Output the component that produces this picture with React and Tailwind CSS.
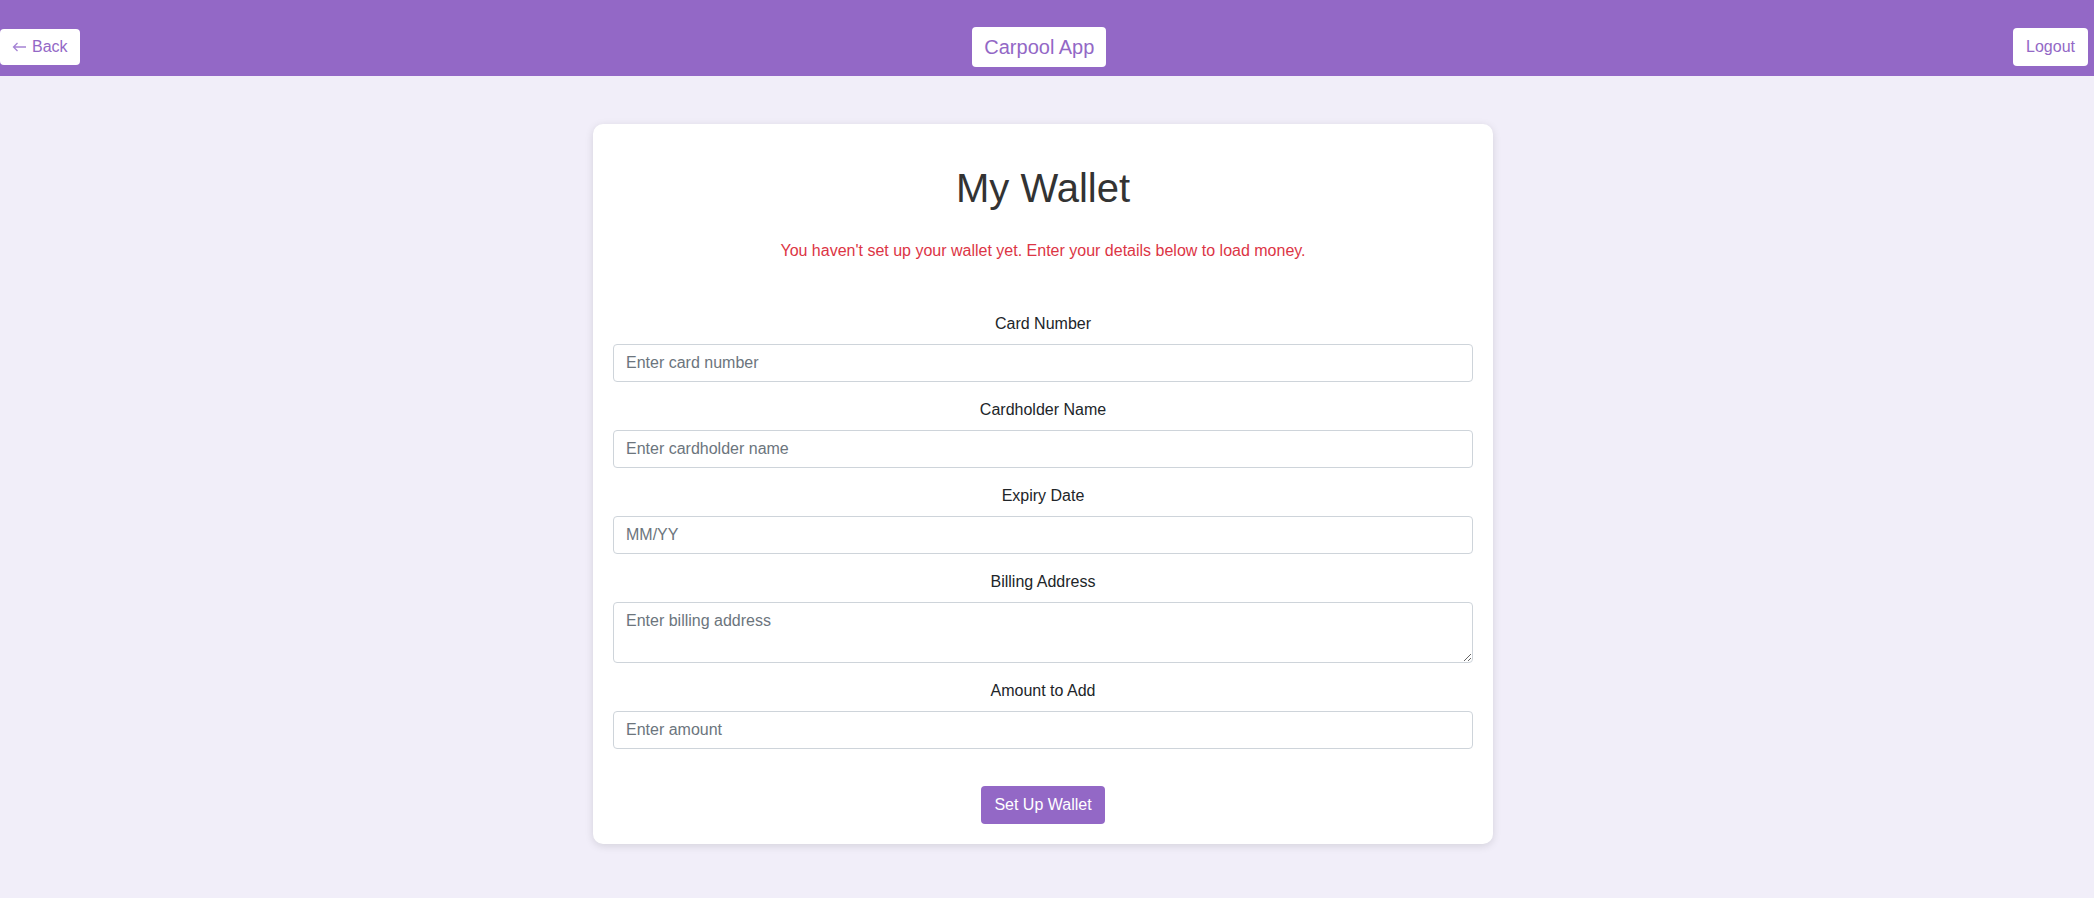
import React, { useState } from 'react';

const fields = [
  { label: 'Card Number', name: 'cardNumber', placeholder: 'Enter card number' },
  { label: 'Cardholder Name', name: 'cardholderName', placeholder: 'Enter cardholder name' },
  { label: 'Expiry Date', name: 'expiry', placeholder: 'MM/YY' },
  { label: 'Billing Address', name: 'billingAddress', placeholder: 'Enter billing address', textarea: true },
  { label: 'Amount to Add', name: 'amount', placeholder: 'Enter amount' },
];

function App() {
  const [form, setForm] = useState({
    cardNumber: '',
    cardholderName: '',
    expiry: '',
    billingAddress: '',
    amount: '',
  });

  const handleChange = (e) => {
    setForm({ ...form, [e.target.name]: e.target.value });
  };

  const handleSubmit = (e) => {
    e.preventDefault();
  };

  return (
    <div className="min-h-screen bg-[#f1eef9] font-['Liberation_Sans',Arial,sans-serif]">
      {/* Header */}
      <header className="h-[76px] bg-[#9368c6] pt-[18px] pr-[6px] flex items-center justify-between">
        <button className="h-[36px] pl-[12px] pr-[12px] bg-white rounded-[4px] text-[16px] text-[#9368c6] flex items-center gap-[6px]">
          <svg width="14" height="10" viewBox="0 0 14 10" fill="none" stroke="#a583d4" strokeWidth="1.3">
            <path d="M14 5H1.5M5.5 1L1.5 5L5.5 9" />
          </svg>
          Back
        </button>
        <button className="h-[40px] px-[12px] mr-[14px] bg-white rounded-[4px] text-[20px] text-[#9368c6] flex items-center">
          Carpool App
        </button>
        <button className="h-[38px] px-[13px] bg-white rounded-[4px] text-[16px] text-[#9368c6] flex items-center">
          Logout
        </button>
      </header>

      <main className="flex justify-center pr-[8px] pt-[48px] pb-[54px]">
        <div className="w-[900px] bg-white rounded-[10px] shadow-[0_2px_8px_rgba(0,0,0,0.12)] px-[20px] pt-[20px] pb-[20px]">
          <h1 className="mt-[20px] text-center text-[40px] leading-[48px] text-[#333333]">My Wallet</h1>
          <p className="mt-[27px] text-center text-[16px] leading-6 text-[#dc3545]">
            You haven't set up your wallet yet. Enter your details below to load money.
          </p>

          <form onSubmit={handleSubmit} className="mt-[49px] flex flex-col gap-[16px]">
            {fields.map((f) => (
              <div key={f.name}>
                <label className="block text-center text-[16px] leading-6 text-[#212529] mb-[8px]">
                  {f.label}
                </label>
                {f.textarea ? (
                  <textarea
                    name={f.name}
                    value={form[f.name]}
                    onChange={handleChange}
                    placeholder={f.placeholder}
                    className="block w-full h-[61px] px-[12px] py-[6px] text-[16px] leading-6 border border-[#ced4da] rounded-[4px] placeholder:text-[#6c757d] outline-none"
                  />
                ) : (
                  <input
                    type="text"
                    name={f.name}
                    value={form[f.name]}
                    onChange={handleChange}
                    placeholder={f.placeholder}
                    className="block w-full h-[38px] px-[12px] text-[16px] border border-[#ced4da] rounded-[4px] placeholder:text-[#6c757d] outline-none"
                  />
                )}
              </div>
            ))}

            <div className="flex justify-center mt-[21px]">
              <button
                type="submit"
                className="h-[38px] px-[13px] bg-[#9368c6] text-white text-[16px] rounded-[4px]"
              >
                Set Up Wallet
              </button>
            </div>
          </form>
        </div>
      </main>
    </div>
  );
}

export default App;
